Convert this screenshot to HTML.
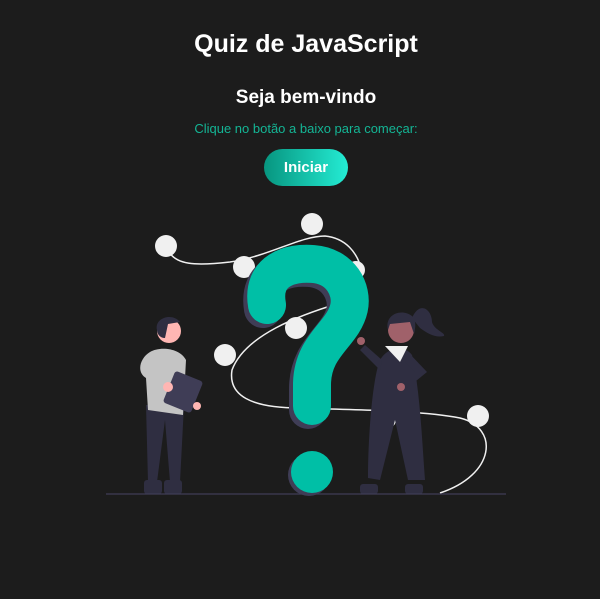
<!DOCTYPE html>
<html><head><style>
html,body{margin:0;padding:0;background:#1c1c1c;width:600px;height:599px;overflow:hidden;font-family:"Liberation Sans",sans-serif;}
.t{position:absolute;left:6px;width:600px;text-align:center;color:#fff;font-weight:bold;}
</style></head><body>
<div class="t" style="top:30px;font-size:25px;">Quiz de JavaScript</div>
<div class="t" style="top:87px;font-size:19px;">Seja bem-vindo</div>
<div class="t" style="top:121px;font-size:13px;font-weight:normal;color:#14b595;">Clique no botão a baixo para começar:</div>
<div style="position:absolute;left:264px;top:149px;width:84px;height:37px;border-radius:19px;background:linear-gradient(90deg,#07957f,#24ecd4);color:#fff;font-weight:bold;font-size:15px;text-align:center;line-height:37px;">Iniciar</div>
<svg style="position:absolute;left:0;top:0" width="600" height="599">
<g fill="none" stroke="#f0f0f0" stroke-width="1.5">
<path d="M168,250 C175,265 195,266 230,262 C270,256 300,236 325,236 C345,238 358,252 362,272"/>
<path d="M340,303 C300,315 245,335 232,370 C228,395 250,408 300,408 C350,410 420,410 460,418 C500,428 495,475 440,493"/>
</g>
<g fill="#f0f0f0">
<circle cx="166" cy="246" r="11"/><circle cx="312" cy="224" r="11"/><circle cx="244" cy="267" r="11"/>
<circle cx="356" cy="270" r="9"/><circle cx="225" cy="355" r="11"/><circle cx="478" cy="416" r="11"/>
<circle cx="297" cy="397" r="8"/><circle cx="388" cy="420" r="8"/>
</g>
<g fill="none" stroke-linecap="round" stroke-width="38">
<path stroke="#3f3d56" d="M263,309 C257,274 287,266 309,268 C337,270 349,294 345,312 C339,339 308,349 308,389 L308,410"/>
<path stroke="#00bfa6" d="M267,305 C261,270 291,262 313,264 C341,266 353,290 349,308 C343,335 312,345 312,385 L312,406"/>
</g>
<circle cx="309" cy="475" r="21" fill="#3f3d56"/>
<circle cx="312" cy="472" r="21" fill="#00bfa6"/>
<circle cx="296" cy="328" r="11" fill="#f0f0f0"/>
<!-- man -->
<path d="M146,405 L148,482 L157,482 L165,420 L170,482 L180,482 L184,405 Z" fill="#2f2e41"/>
<rect x="144" y="480" width="18" height="14" rx="3" fill="#2f2e41"/>
<rect x="164" y="480" width="18" height="14" rx="3" fill="#2f2e41"/>
<path d="M150,352 C140,358 136,372 146,378 L148,410 L183,415 L186,360 C180,348 160,346 150,352 Z" fill="#c4c4c4"/>
<circle cx="169" cy="331" r="12" fill="#ffb6b3"/>
<path d="M157,330 C154,318 172,312 180,322 L168,324 L165,338 C160,338 157,334 157,330 Z" fill="#2f2e41"/>
<rect x="168" y="375" width="30" height="34" rx="3" transform="rotate(22 183 392)" fill="#3f3d56"/>
<circle cx="168" cy="387" r="5" fill="#ffb6b3"/><circle cx="197" cy="406" r="4" fill="#ffb6b3"/>
<!-- woman -->
<path d="M380,360 C372,380 368,440 368,478 L380,480 L395,420 L408,480 L425,480 C422,440 420,390 412,355 C405,345 388,346 380,360 Z" fill="#2f2e41"/>
<rect x="360" y="484" width="18" height="10" rx="3" fill="#2f2e41"/>
<rect x="405" y="484" width="18" height="10" rx="3" fill="#2f2e41"/>
<path d="M385,346 L400,362 L408,346 Z" fill="#f0f0f0"/>
<path d="M365,345 L382,360 L380,370 L360,350 Z" fill="#2f2e41"/>
<path d="M408,352 L427,372 L405,390 L400,384 L415,372 L405,362 Z" fill="#2f2e41"/>
<circle cx="361" cy="341" r="4" fill="#a0616a"/><circle cx="401" cy="387" r="4" fill="#a0616a"/>
<circle cx="401" cy="330" r="13" fill="#a0616a"/>
<path d="M388,330 C384,314 402,308 412,316 C416,320 416,326 414,334 L410,322 L390,324 Z" fill="#2f2e41"/>
<path d="M412,318 C420,300 432,310 432,322 C434,330 446,333 444,336 C436,338 428,334 420,328 Z" fill="#2f2e41"/>
<line x1="106" y1="494" x2="506" y2="494" stroke="#3f3d56" stroke-width="1.2"/>
</svg>
</body></html>
